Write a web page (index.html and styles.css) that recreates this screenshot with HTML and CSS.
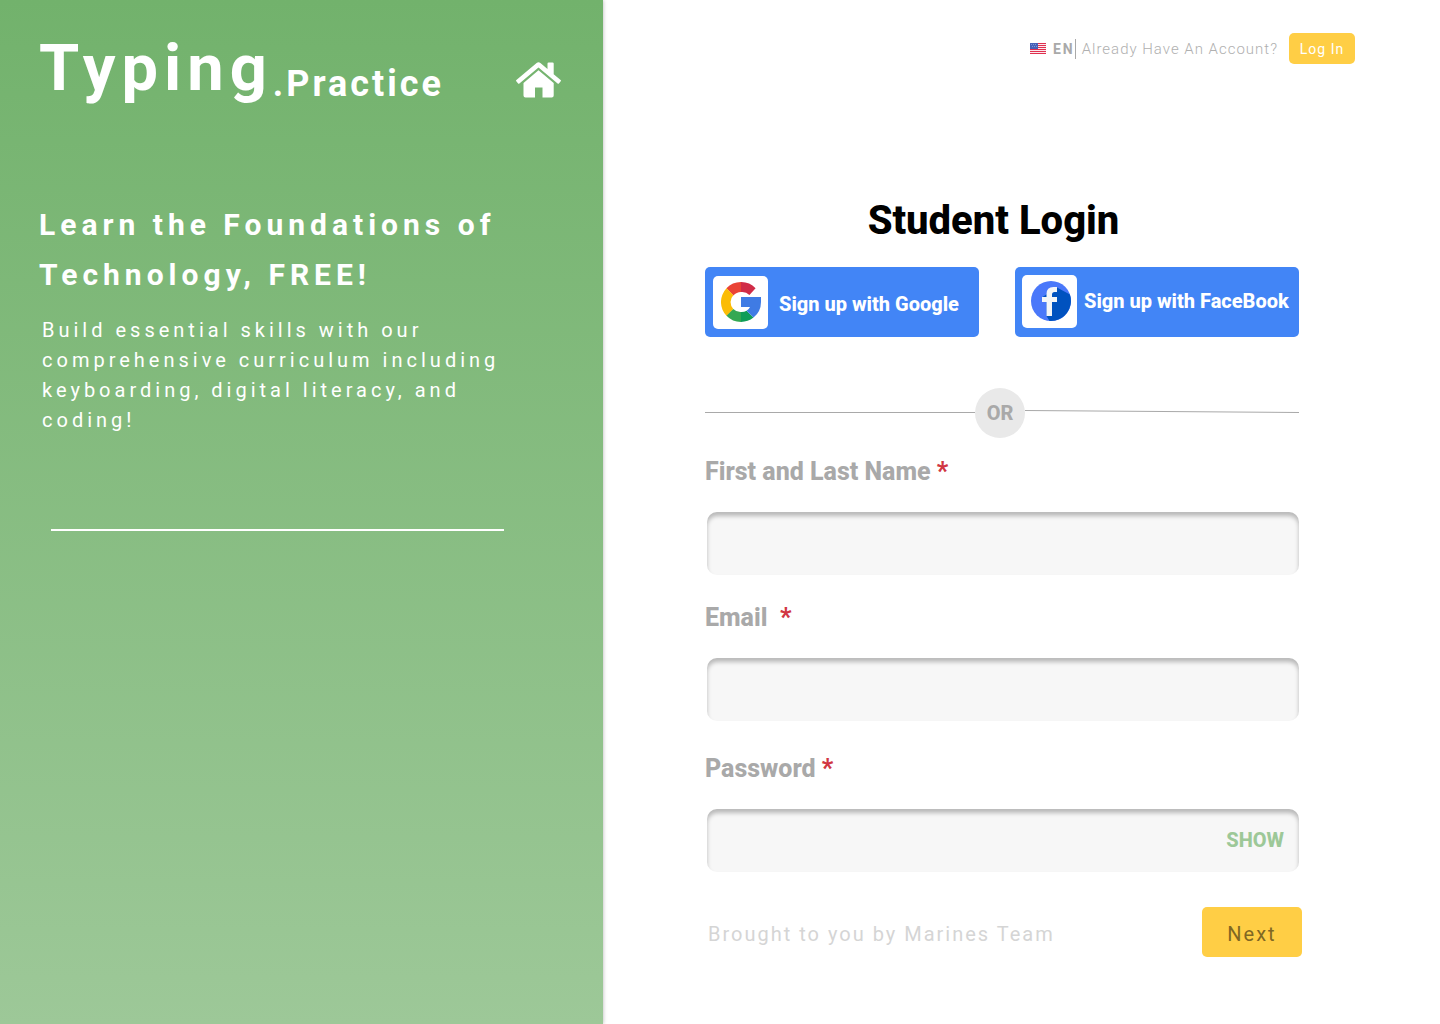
FILE: index.html
```html
<!DOCTYPE html>
<html lang="en">
<head>
<meta charset="utf-8">
<title>Typing.Practice – Student Login</title>
<link rel="stylesheet" href="styles.css">
</head>
<body>
<div class="page">
  <aside class="intro">
    <div class="brand-row">
      <div class="brand"><span class="brand-main">Typing</span><span class="brand-sub">.Practice</span></div>
      <a class="home" href="#" aria-label="Home">
        <svg width="46" height="36" viewBox="0 0 46 36" fill="#fff">
          <path d="M20.6 1Q22.5-.4 24.4 1L31.500 7V1.600Q31.500 .4 32.700 .4H36.500Q37.700 .4 37.700 1.600V12.200L44.600 18Q45.300 18.600 44.700 19.300L42.900 21.400Q42.300 22 41.600 21.500L22.500 5.400 3.400 21.500Q2.700 22 2.100 21.400L.3 19.300Q-.3 18.600 .4 18Z"/>
          <path d="M22.500 8.200L37.700 21V33.600Q37.700 35.600 35.700 35.600H26.500V25.400H19V35.600H9.500Q7.500 35.600 7.500 33.600V21Z"/>
        </svg>
      </a>
    </div>
    <h2 class="headline">Learn the Foundations of Technology, FREE!</h2>
    <p class="lead">Build essential skills with our comprehensive curriculum including keyboarding, digital literacy, and coding!</p>
    <hr class="rule">
  </aside>
  <main class="main">
    <header class="topbar">
      <button class="lang" type="button">
        <svg width="16" height="11" viewBox="0 0 16 11" shape-rendering="crispEdges">
          <path fill="#fbe9ee" d="M0 0h16v11H0z"/>
          <path fill="#e0304f" d="M0 0h16v1H0zM0 2h16v1H0zM0 4h16v1H0zM0 6h16v1H0zM0 8h16v1H0zM0 10h16v1H0z"/>
          <path fill="#4661b8" d="M0 0h8v6H0z"/>
          <path fill="#8095d6" d="M1 1h1v1H1zM3 1h1v1H3zM5 1h1v1H5zM2 3h1v1H2zM4 3h1v1H4zM6 3h1v1H6z"/>
        </svg>
        EN
      </button>
      <span class="account">Already Have An Account?</span>
      <button class="login" type="button">Log In</button>
    </header>
    <form class="form">
      <h1 class="title">Student Login</h1>
      <div class="social">
        <button class="social-button google" type="button">
          <span class="tile">
            <svg width="40" height="40" viewBox="0 0 40 40">
              <path fill="#ea4335" d="M5.400 6.300A20 20 0 0 1 20 0V10A10 10 0 0 0 12.400 13.500Z"/>
              <path fill="#d02c47" d="M20 0A20 20 0 0 1 34.600 6.200L28.400 13A10 10 0 0 0 20 10Z"/>
              <path fill="#fbbc05" d="M5.500 6.200A20 20 0 0 0 5.700 34L12.300 27A10 10 0 0 1 12.300 13.200Z"/>
              <path fill="#34a853" d="M5.500 33.800A20 20 0 0 0 20 40V30A10 10 0 0 1 12.300 27Z"/>
              <path fill="#0f9d58" d="M20 40A20 20 0 0 0 32.500 35.600L25.600 28.700A10 10 0 0 1 20 30Z"/>
              <path fill="#3f7be4" d="M20 15H40V20A20 20 0 0 1 32.500 35.600L25.600 28.700Q27.800 27.500 29 25H20Z"/>
            </svg>
          </span>
          <span class="social-label">Sign up with Google</span>
        </button>
        <button class="social-button facebook" type="button">
          <span class="tile">
            <svg width="40" height="40" viewBox="0 0 40 40">
              <circle cx="20" cy="20" r="20" fill="#4a78fa"/>
              <path fill="#0052bf" d="M26 6.500L38.900 13.600A20 20 0 0 1 18.500 39.900L15.500 35V20.600L11.500 20.600V16Z"/>
              <path fill="#f4f5f7" d="M26 6V11H23.500Q21 11 21 13.500V16H26V21H21V35H15.500V21H11V16H15.500V13Q15.500 6 22.500 6Z"/>
            </svg>
          </span>
          <span class="social-label">Sign up with FaceBook</span>
        </button>
      </div>
      <div class="divider">
        <svg class="line" height="8" viewBox="0 0 270 8" preserveAspectRatio="none"><path d="M0 3.500H270"/></svg>
        <span class="or">OR</span>
        <svg class="line" height="8" viewBox="0 0 274 8" preserveAspectRatio="none"><path d="M0 1.500L274 3.500"/></svg>
      </div>
      <div class="field">
        <label for="name">First and Last Name <span class="required">*</span></label>
        <input id="name" type="text">
      </div>
      <div class="field">
        <label for="email">Email&nbsp; <span class="required">*</span></label>
        <input id="email" type="email">
      </div>
      <div class="field field-last">
        <label for="password">Password <span class="required">*</span></label>
        <div class="password">
          <input id="password" type="password">
          <button class="show" type="button">SHOW</button>
        </div>
      </div>
      <footer class="actions">
        <span class="credit">Brought to you by Marines Team</span>
        <button class="next" type="submit">Next</button>
      </footer>
    </form>
  </main>
</div>
</body>
</html>
```
FILE: styles.css
```css
* {
  box-sizing: border-box;
}

body {
  margin: 0;
  font-family: Roboto, sans-serif;
  background: #fff;
}

button {
  padding: 0;
  border: 0;
  background: none;
  font: inherit;
  cursor: pointer;
}

.page {
  display: grid;
  grid-template-columns: 603fr 837fr;
  min-height: 100vh;
}

.intro {
  padding: 30px 41px 40px 39px;
  color: #fff;
  background: linear-gradient(#72b26c, #9dc898);
  box-shadow: 0 0 4px rgba(0, 0, 0, 0.3);
}

.brand-row {
  display: flex;
  justify-content: space-between;
  align-items: center;
}

.brand {
  display: flex;
  align-items: flex-end;
  font-weight: 700;
}

.brand-main {
  font-size: 65px;
  line-height: 76px;
  letter-spacing: 6px;
}

.brand-sub {
  font-size: 36px;
  line-height: 44px;
  letter-spacing: 3px;
}

.home {
  display: flex;
  padding-top: 24px;
}

.headline {
  margin: 94px 0 0;
  font-size: 30px;
  line-height: 50px;
  letter-spacing: 5px;
  font-weight: 700;
}

.lead {
  max-width: 480px;
  margin: 15px 0 0 3px;
  font-size: 20px;
  line-height: 30px;
  letter-spacing: 4px;
}

.rule {
  margin: 94px 58px 0 12px;
  border: 0;
  border-top: 2px solid #fff;
}

.main {
  padding: 33px 85px 60px 102px;
}

.topbar {
  display: flex;
  justify-content: flex-end;
  align-items: center;
  font-size: 15px;
  letter-spacing: 1px;
  color: #b0b0b0;
}

.lang {
  display: flex;
  align-items: center;
  gap: 7px;
  height: 20px;
  border-right: 1px solid #a9a9a9;
  font-size: 14px;
  font-weight: 700;
  letter-spacing: 2px;
  color: #a9a9a9;
}

.account {
  margin: 0 11px 0 6px;
  font-weight: 300;
}

.login {
  width: 66px;
  height: 31px;
  border-radius: 5px;
  background: #ffce45;
  color: #fff;
  font-size: 14px;
  letter-spacing: 1px;
}

.form {
  margin-right: 53px;
}

.title {
  margin: 133px 20px 0 0;
  font-size: 40px;
  line-height: 48px;
  font-weight: 800;
  text-align: center;
}

.social {
  display: grid;
  grid-template-columns: 274fr 284fr;
  gap: 36px;
  margin: 22px 3px 0 0;
}

.social-button {
  display: flex;
  align-items: center;
  height: 70px;
  border-radius: 5px;
  background: #4285f6;
  color: #fff;
  font-size: 20px;
  font-weight: 800;
  white-space: nowrap;
}

.google {
  gap: 11px;
  padding-left: 8px;
}

.google .social-label {
  padding-top: 4px;
}

.facebook {
  gap: 7px;
  padding: 0 0 2px 7px;
}

.tile {
  display: flex;
  align-items: center;
  justify-content: center;
  width: 55px;
  height: 53px;
  border-radius: 5px;
  background: #fff;
}

.facebook .tile {
  padding-left: 3px;
}

.divider {
  display: grid;
  grid-template-columns: 270fr 50px 274fr;
  align-items: center;
  margin: 51px 3px 19px 0;
}

.line {
  width: 100%;
  fill: none;
  stroke: #a9a9a9;
}

.or {
  height: 50px;
  border-radius: 50%;
  background: #e9e9e9;
  color: #a9a9a9;
  font-size: 20px;
  line-height: 50px;
  font-weight: 800;
  text-align: center;
}

.field {
  margin: 0 3px 28px 0;
}

.field-last {
  margin: 33px 3px 35px 0;
}

.field label {
  display: block;
  font-size: 25px;
  line-height: 30px;
  font-weight: 800;
  color: #a9a9a9;
}

.required {
  color: #d13643;
}

.field input {
  display: block;
  width: 100%;
  height: 63px;
  padding: 0 16px;
  border: 0;
  border-radius: 10px;
  background: #f7f7f7;
  box-shadow: inset 0 4px 4px rgba(0, 0, 0, 0.25);
  font: inherit;
  font-size: 20px;
}

.field > input,
.password {
  margin: 25px 0 0 2px;
}

.field > input {
  width: calc(100% - 2px);
}

.password {
  position: relative;
}

.show {
  position: absolute;
  top: 16px;
  right: 15px;
  font-size: 20px;
  line-height: 30px;
  font-weight: 800;
  color: #9dc898;
}

.actions {
  display: flex;
  justify-content: space-between;
  align-items: center;
  margin-left: 3px;
  font-size: 20px;
}

.credit {
  padding-top: 4px;
  letter-spacing: 2px;
  color: #d5d5d5;
}

.next {
  width: 100px;
  height: 50px;
  padding-top: 4px;
  border-radius: 5px;
  background: #ffce45;
  color: #806723;
  letter-spacing: 2px;
}
```
